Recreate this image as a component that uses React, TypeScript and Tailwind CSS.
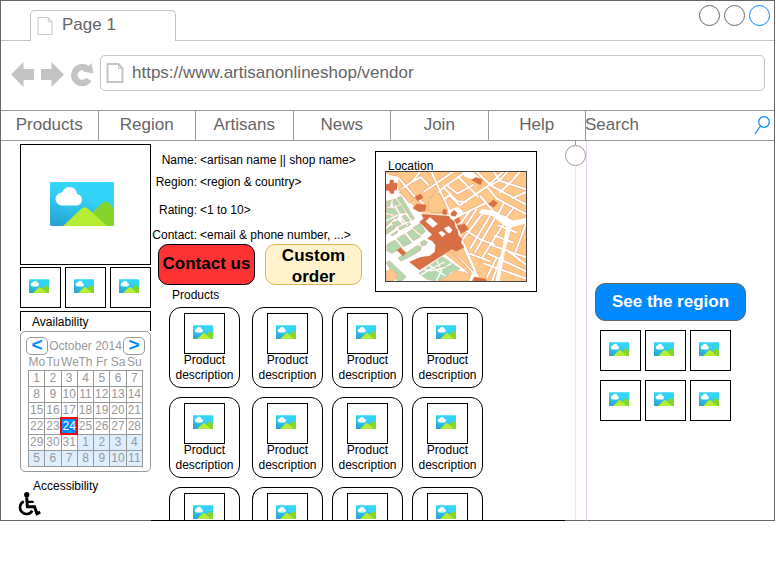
import { useId } from "react";

const NAV = ["Products", "Region", "Artisans", "News", "Join", "Help"];
const WEEKDAYS = ["Mo", "Tu", "We", "Th", "Fr", "Sa", "Su"];
const DAYS = Array.from({ length: 42 }, (_, i) => (i < 31 ? i + 1 : i - 30));
const WEEKS = [0, 1, 2, 3, 4, 5].map((w) => DAYS.slice(w * 7, w * 7 + 7));
const DETAILS = [
  { label: "Name:", value: "<artisan name || shop name>", row: "h-[22px]" },
  { label: "Region:", value: "<region & country>", row: "h-[22px]" },
  { label: "Rating:", value: "<1 to 10>", row: "h-[28px]" },
  { label: "Contact:", value: "<email & phone number, ...>", row: "h-[25px]" },
];

function Picture({ className }: { className: string }) {
  const id = useId();
  return (
    <svg viewBox="0 0 64 44" className={className} role="img" aria-label="Picture">
      <defs>
        <linearGradient id={id} x1="0.45" y1="0.3" x2="0.15" y2="1">
          <stop offset="0" stopColor="#33d4f8" />
          <stop offset="1" stopColor="#27a3d2" />
        </linearGradient>
      </defs>
      <rect width="64" height="44" rx="1.5" fill={`url(#${id})`} />
      <path d="M12 23.500A6.500 6.500 0 0 1 12 10.500Q14 5 19.500 5Q26 5 27 12A5.800 5.800 0 0 1 26.500 23.500Z" fill="#fff" />
      <path d="M40 44L43 30L51 22Q56 17.500 60 22L64 27V42.500Q64 44 62.500 44Z" fill="#86d52f" />
      <path d="M13 44L31 27Q35 23.500 38.500 27L57 44Z" fill="#b5ec34" />
    </svg>
  );
}

function Thumb() {
  return (
    <div className="flex size-[41px] shrink-0 items-center justify-center border border-black bg-white pr-[3px] pb-[3px]">
      <Picture className="h-[14px] w-[20px]" />
    </div>
  );
}

function PageIcon({ className, stroke }: { className: string; stroke: number }) {
  return (
    <svg viewBox="0 0 17 20" className={className} fill="none" stroke="#c4c4c4" strokeWidth={stroke} aria-hidden="true">
      <path d="M1 1H12L16 5.500V19H1Z" />
      <path d="M12 1V5.500H16" strokeWidth="1" />
    </svg>
  );
}

const ROADS = [
  "M183 78L216 150L245 212L320 390",
  "M150 78L128 108L84 140",
  "M84 96L130 150L160 175",
  "M128 108L152 96L176 120",
  "M176 166L228 120L290 78",
  "M160 140L205 110L250 78",
  "M222 128L262 168L290 170",
  "M262 92L310 140L326 156",
  "M228 118L262 145L310 118",
  "M214 166L238 150L268 180",
  "M268 180L350 124L400 78",
  "M318 78L362 120L468 178",
  "M350 124L380 160L468 206",
  "M330 152L370 198L440 234",
  "M370 78L388 106L468 132",
  "M362 120L388 104L414 78",
  "M388 142L424 108L450 78",
  "M424 160L468 140",
  "M402 172L384 206",
  "M430 188L406 218",
  "M262 214L350 172",
  "M270 236L300 196",
  "M284 246L320 190",
  "M278 282L344 196",
  "M300 310L364 204",
  "M314 322L378 212",
  "M286 254L330 282L374 298",
  "M264 312L360 348",
  "M334 340L410 222",
  "M384 240L440 262",
  "M372 270L430 292",
  "M360 298L468 336",
  "M410 314L468 358",
  "M352 324L468 378",
  "M340 354L468 400",
  "M424 236L400 310L366 407",
  "M468 234L436 320",
  "M380 336L350 396",
];

const GREENS = [
  "M48 168L64 164L58 184L48 186Z",
  "M68 163L76 160L88 176L70 184Z",
  "M80 157L93 153L133 220L126 224Z",
  "M48 190L66 188L92 204L86 210L48 202Z",
  "M72 188L92 180L106 202L96 204Z",
  "M48 208L62 210L72 220L48 244Z",
  "M68 210L84 214L78 222Z",
  "M92 214L106 208L120 226L100 232Z",
  "M66 232L84 226L94 236L72 246Z",
  "M48 252L64 240L76 248L48 268Z",
  "M62 268L82 256L82 262L66 272Z",
  "M86 246L118 232L122 238L88 254Z",
  "M50 298L74 284L96 308L66 324L50 316Z",
  "M80 280L104 266L124 292L100 304Z",
  "M110 262L126 252L152 274L130 286Z",
  "M128 248L150 234L166 258L154 268Z",
  "M84 338L112 320L142 300L154 306L150 316L116 336L92 347Z",
  "M150 292L162 284L172 290L166 300L154 302Z",
  "M48 352L58 346L108 394L94 407L82 407Z",
  "M146 384L200 346L216 334L234 346L270 370L240 382L224 398L198 407L170 402Z",
];

const DARKS = [
  "M47 118L58 115L60 104L70 104L70 112L82 114L80 133L73 134L70 145L60 144L58 137L47 135Z",
  "M134 154L152 146L159 157L142 167Z",
  "M130 185L140 176L168 179L165 196L148 200L130 190Z",
  "M154 206L190 209L236 212L242 222L252 228L256 248L262 252L264 270L276 280L272 292L282 306L258 318L244 312L148 374L118 350L150 336L178 332L194 320L196 300L186 286L172 280L186 268L148 230L160 220Z",
  "M216 200L222 190L230 196L228 208L218 206Z",
  "M242 204L252 194L261 204L256 213L244 211Z",
  "M260 242L284 236L295 252L274 264Z",
  "M253 224L266 216L270 228L259 235Z",
  "M304 104L318 96L337 104L331 119Z",
  "M355 176L370 163L382 172L371 186Z",
  "M306 408L312 395L346 401L350 408Z",
  "M80 314L92 308L108 322L98 332Z",
];

function CityMap() {
  return (
    <svg
      viewBox="47 80 421 327"
      preserveAspectRatio="xMidYMid slice"
      className="block h-[111px] w-full border border-[#444] bg-white"
      role="img"
      aria-label="Street map"
    >
      <rect x="40" y="70" width="440" height="350" fill="#ffc88a" />
      <g fill="none" stroke="#e2a57a" strokeWidth="9">
        {ROADS.map((d) => <path key={d} d={d} />)}
      </g>
      <g fill="none" stroke="#fff" strokeWidth="6">
        {ROADS.map((d) => <path key={d} d={d} />)}
      </g>
      <path d="M40 80L84 96L84 140L128 180L160 204L245 208L250 240L280 300L228 320L300 384L262 420L40 420Z" fill="#fff" />
      <path d="M176 168L196 136L212 150L236 204L186 202L172 190Z" fill="#ffc88a" stroke="#e2a57a" strokeWidth="2" />
      <path d="M88 136L104 128L132 160L118 174Z" fill="#ffc88a" stroke="#e2a57a" strokeWidth="2" />
      <path d="M48 80L82 80L76 92L58 88Z" fill="#ffc88a" stroke="#e2a57a" strokeWidth="2" />
      <path d="M240 296L284 296L318 378L330 407L296 407L306 382L250 318Z" fill="#fff" />
      <path d="M250 318L278 308L310 378Z" fill="#ffc88a" stroke="#e2a57a" strokeWidth="2" />
      <path d="M226 326L240 318L302 378L296 382Z" fill="#ffc88a" stroke="#e2a57a" strokeWidth="2" />
      <path d="M206 407L260 376L300 386L296 407Z" fill="#ffc88a" stroke="#e2a57a" strokeWidth="2" />
      <path d="M276 80L306 80L330 98L304 100L284 94Z" fill="#fff" />
      <path d="M336 190L368 196L426 226L468 218L468 234L424 246L404 320L388 407L376 407L396 310L408 244L366 212L326 204Z" fill="#fff" />
      <path d="M232 196L262 184L280 200L262 220L242 222Z" fill="#fff" />
      <g fill="#b1d8ae" stroke="#dfb18d" strokeWidth="2">
        {GREENS.map((d) => <path key={d} d={d} />)}
      </g>
      <path d="M48 378L66 372L82 390L70 407L48 407Z" fill="#ffc88a" stroke="#e2a57a" strokeWidth="2" />
      <g fill="none" stroke="#fff" strokeWidth="4">
        <path d="M160 372Q200 384 244 354M178 360L226 392M150 390Q186 366 224 350M200 346L214 376L198 407M48 226L92 206M74 180L92 214L112 240" />
        <path d="M190 376Q210 356 244 366" stroke="#dfb18d" strokeWidth="2" />
      </g>
      <g fill="#d97045" stroke="#cf6a40" strokeWidth="1">
        {DARKS.map((d) => <path key={d} d={d} />)}
      </g>
      <path d="M166 228L180 216L203 236L188 247ZM205 262L214 256L227 266L216 275ZM222 248L236 242L247 254L238 265L228 258ZM168 324L180 316L186 322L174 332Z" fill="#fff" />
    </svg>
  );
}

function Calendar() {
  const arrow =
    "flex h-[18px] w-[22px] shrink-0 items-center justify-center rounded-[5px] border border-[#999] bg-white pb-[3px] text-[19px] leading-none font-bold text-[#0088ff]";
  return (
    <div className="h-[141px] rounded-[5px] border border-[#999] bg-white pt-[5px] text-[12px] leading-[14px] text-[#999]">
      <div className="flex items-center justify-between px-[5px]">
        <button type="button" aria-label="Previous month" className={arrow}>&lt;</button>
        <span className="pb-px whitespace-nowrap">October 2014</span>
        <button type="button" aria-label="Next month" className={arrow}>&gt;</button>
      </div>
      <table className="mx-auto w-[115px] table-fixed border-collapse text-center">
        <thead>
          <tr>
            {WEEKDAYS.map((d) => (
              <th key={d} className="h-[15px] p-0 align-top font-normal">{d}</th>
            ))}
          </tr>
        </thead>
        <tbody>
          {WEEKS.map((week, w) => (
            <tr key={w}>
              {week.map((day, d) => {
                const index = w * 7 + d;
                const look =
                  index === 23
                    ? "bg-[#0088ff] text-white outline-2 -outline-offset-1 outline-[#f00]"
                    : index > 30
                      ? "bg-[#ddeeff]"
                      : "";
                return (
                  <td key={d} className={`h-[16px] border border-[#999] p-0 align-top ${look}`}>
                    <span className="flex justify-center">{day}</span>
                  </td>
                );
              })}
            </tr>
          ))}
        </tbody>
      </table>
    </div>
  );
}

function ProductCard() {
  return (
    <article className="flex h-[81px] w-[71px] flex-col items-center rounded-[12px] border border-black bg-white pt-[5px]">
      <Thumb />
      <p className="-mt-px text-center text-[12px] leading-[15px]">Product description</p>
    </article>
  );
}

function ProductCardTop() {
  return (
    <article className="flex h-[33px] w-[71px] flex-col items-center overflow-hidden rounded-t-[12px] border-x border-t border-black bg-white pt-[5px]">
      <Thumb />
    </article>
  );
}

export default function App() {
  return (
    <div className="bg-white pr-px font-['Liberation_Sans',Arial,sans-serif] text-black">
      <div className="border-x border-t border-[#666]">
        <header>
          <div className="flex h-[40px]">
            <div className="w-[29px] border-b border-[#c4c4c4]" />
            <div className="mt-[9px] flex w-[146px] items-center gap-[9px] rounded-t-[5px] border-x border-t border-[#c4c4c4] pl-[6px] text-[17px] leading-[20px] text-[#666]">
              <PageIcon className="h-[20px] w-[16px]" stroke={1} />
              <span className="pb-[2px]">Page 1</span>
            </div>
            <div className="flex flex-1 justify-end gap-[4px] border-b border-[#c4c4c4] pt-[4px] pr-[4px]">
              <button type="button" aria-label="Minimize" className="size-[21px] rounded-full border border-[#666]" />
              <button type="button" aria-label="Maximize" className="size-[21px] rounded-full border border-[#666]" />
              <button type="button" aria-label="Close" className="size-[21px] rounded-full border border-[#0088ff]" />
            </div>
          </div>

          <div className="flex h-[69px] items-start pt-[14px] pr-[9px] pl-[10px]">
            <div className="flex h-[38px] w-[89px] items-center gap-[7px]">
              <button type="button" aria-label="Back">
                <svg viewBox="0 0 23 25" className="h-[25px] w-[23px]" fill="#c4c4c4" aria-hidden="true">
                  <path d="M0 12.500L12.500 0V7H23V18H12.500V25Z" />
                </svg>
              </button>
              <button type="button" aria-label="Forward">
                <svg viewBox="0 0 23 25" className="h-[25px] w-[23px]" fill="#c4c4c4" aria-hidden="true">
                  <path d="M23 12.500L10.500 0V7H0V18H10.500V25Z" />
                </svg>
              </button>
              <button type="button" aria-label="Reload">
                <svg viewBox="0 0 23 24" className="h-[24px] w-[23px]" aria-hidden="true">
                  <path d="M18 17.500A8 8 0 1 1 16.500 7" fill="none" stroke="#c4c4c4" strokeWidth="6.500" />
                  <path d="M20.500 1L22.500 11.500L12 9.500Z" fill="#c4c4c4" />
                </svg>
              </button>
            </div>
            <div className="flex h-[36px] min-w-0 flex-1 items-center gap-[8px] rounded-[5px] border border-[#c4c4c4] pl-[5px]">
              <PageIcon className="h-[20px] w-[18px]" stroke={2} />
              <input
                aria-label="Address"
                defaultValue="https://www.artisanonlineshop/vendor"
                className="min-w-0 flex-1 pb-px text-[17px] leading-[20px] text-[#666] outline-none"
              />
            </div>
          </div>

          <div className="flex h-[31px] border-y border-[#999] text-[17px] leading-[20px] text-[#666]">
            <nav className="grid w-[585px] shrink-0 grid-cols-6">
              {NAV.map((item) => (
                <a key={item} href="#" className="flex items-center justify-center border-r border-[#999] pb-px">
                  {item}
                </a>
              ))}
            </nav>
            <label className="flex min-w-0 flex-1 items-center pr-[4px]">
              <input
                type="text"
                aria-label="Search"
                placeholder="Search"
                className="-ml-px min-w-0 flex-1 pb-px text-[#666] outline-none placeholder:text-[#666] placeholder:opacity-100"
              />
              <svg viewBox="0 0 16 19" className="h-[19px] w-[16px]" fill="none" stroke="#0088ff" strokeWidth="1.200" aria-hidden="true">
                <circle cx="10" cy="6" r="5.300" />
                <path d="M6.500 10L1 18" />
              </svg>
            </label>
          </div>
        </header>

        <main className="flex">
          <aside className="w-[150px] shrink-0 border-b border-[#666] pt-[3px] pl-[19px]">
            <div className="flex h-[121px] items-center justify-center border border-black pr-[7px] pb-px">
              <Picture className="h-[44px] w-[64px]" />
            </div>
            <div className="mt-[2px] flex gap-[4px]">
              <Thumb />
              <Thumb />
              <Thumb />
            </div>
            <h2 className="mt-[3px] h-[20px] border-x border-t border-black pt-[3px] pl-[11px] text-[12px] leading-[15px]">
              Availability
            </h2>
            <Calendar />
            <h2 className="mt-[7px] pl-[13px] text-[12px] leading-[15px]">Accessibility</h2>
            <svg viewBox="28 560 68 76" className="-mt-[2px] -ml-[2px] h-[25px] w-[24px]" fill="none" stroke="#000" aria-hidden="true">
              <circle cx="52" cy="568" r="8" fill="#000" stroke="none" />
              <path d="M52 576L54 605H76L83 626L93 621" strokeWidth="9" />
              <path d="M53 590H73" strokeWidth="7" />
              <path d="M43 589A20 20 0 1 0 69 617" strokeWidth="8" />
            </svg>
          </aside>

          <section className="min-w-0 flex-1 border-b border-black">
            <div className="flex">
              <div className="w-[224px] shrink-0 pt-[8px]">
                <dl className="text-[12px] leading-[22px]">
                  {DETAILS.map(({ label, value, row }) => (
                    <div key={label} className={`flex items-end gap-[3px] ${row}`}>
                      <dt className="w-[46px] shrink-0 text-right">{label}</dt>
                      <dd className="whitespace-nowrap">{value}</dd>
                    </div>
                  ))}
                </dl>
                <div className="-mt-[2px] flex gap-[10px] pl-[7px] text-[17px] leading-[21px] font-bold">
                  <button type="button" className="h-[41px] w-[97px] rounded-[10px] border border-black bg-[#ff3333] pb-[2px] whitespace-nowrap">
                    <span className="-mx-2">Contact us</span>
                  </button>
                  <button type="button" className="h-[41px] w-[97px] rounded-[10px] border border-[#d6b656] bg-[#fff2cc] pb-[4px]">
                    Custom order
                  </button>
                </div>
                <h2 className="mt-[3px] pl-[21px] text-[12px] leading-[15px]">Products</h2>
              </div>
              <div className="mt-[10px] h-[141px] w-[162px] shrink-0 border border-black px-[9px] pt-[6px]">
                <h2 className="h-[13px] pl-[3px] text-[12px] leading-[16px]">Location</h2>
                <CityMap />
              </div>
            </div>
            <div className="mt-[4px] grid grid-cols-[83px_80px_80px_71px] gap-y-[9px] pl-[18px]">
              {Array.from({ length: 8 }, (_, i) => (
                <ProductCard key={i} />
              ))}
              {Array.from({ length: 4 }, (_, i) => (
                <ProductCardTop key={i} />
              ))}
            </div>
          </section>

          <div className="flex w-[21px] shrink-0 flex-col items-center border-b border-[#666]">
            <div className="h-[4px] w-px bg-[#999]" />
            <button type="button" aria-label="Scroll handle" className="size-[21px] shrink-0 rounded-full border border-[#999]" />
            <div className="w-px flex-1 bg-[#ddeeff]" />
          </div>

          <aside className="w-[188px] shrink-0 border-b border-l border-b-[#666] border-l-[#e6d0f5] pt-[142px] pl-[8px]">
            <button type="button" className="h-[38px] w-[151px] rounded-[10px] border border-[#666] bg-[#0088ff] text-[17px] leading-[20px] font-bold text-white">
              See the region
            </button>
            <div className="mt-[9px] grid grid-cols-[41px_41px_41px] gap-x-[4px] gap-y-[9px] pl-[5px]">
              {Array.from({ length: 6 }, (_, i) => (
                <Thumb key={i} />
              ))}
            </div>
          </aside>
        </main>
      </div>
    </div>
  );
}
